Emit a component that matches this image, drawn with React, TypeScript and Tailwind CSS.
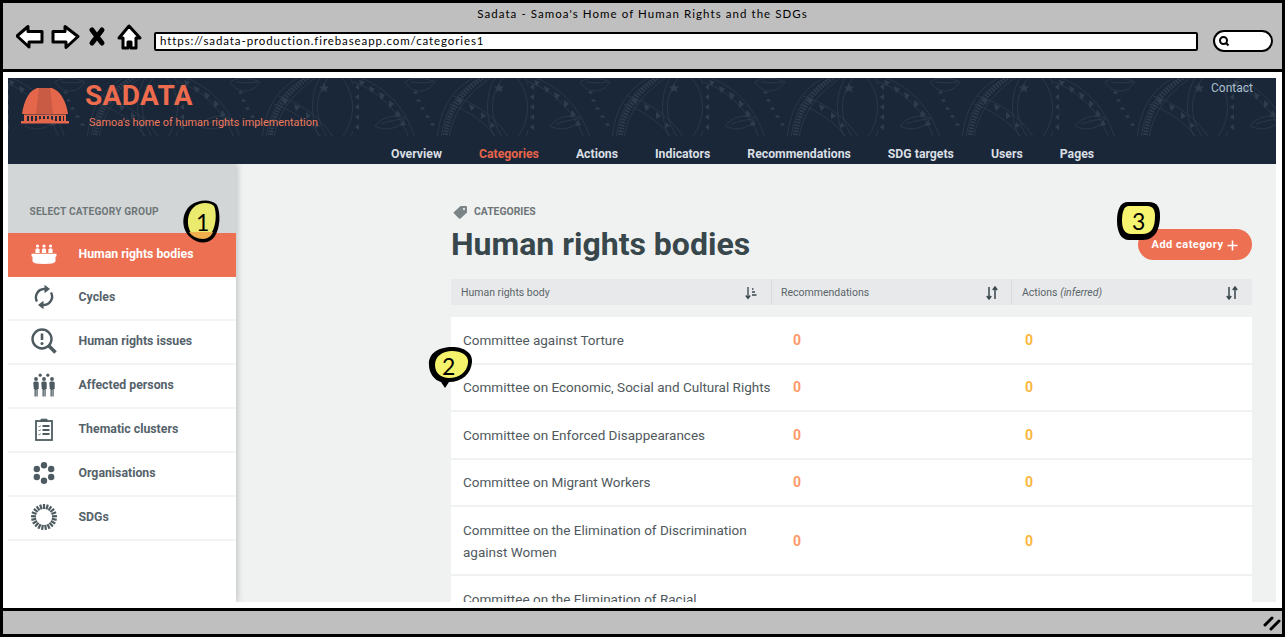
const navItems = ["Overview", "Categories", "Actions", "Indicators", "Recommendations", "SDG targets", "Users", "Pages"]

const rows = [
  { name: "Committee against Torture", h: "h-[47.500px]" },
  { name: "Committee on Economic, Social and Cultural Rights", h: "h-[47.500px]" },
  { name: "Committee on Enforced Disappearances", h: "h-[47.500px]" },
  { name: "Committee on Migrant Workers", h: "h-[47.500px]" },
  { name: "Committee on the Elimination of Discrimination against Women", h: "h-[69px]" },
  { name: "Committee on the Elimination of Racial Discrimination", h: "h-[69px]" },
]

function BodiesIcon({ color }: { color: string }) {
  return (
    <svg width="26" height="22" viewBox="0 0 26 22" fill={color}>
      <circle cx="6.500" cy="3" r="1.600" /><circle cx="13" cy="3" r="1.600" /><circle cx="19.500" cy="3" r="1.600" />
      <path d="M4.400 10V6.800q0-1.600 2.100-1.600t2.100 1.600V10zM10.900 10V6.800q0-1.600 2.100-1.600t2.100 1.600V10zM17.400 10V6.800q0-1.600 2.100-1.600t2.100 1.600V10z" />
      <path d="M0.500 10.800h25v2q0 .8-1 .9v4.800q-1 2.500-11.500 2.500T1.500 18.500v-4.800q-1-.1-1-.9z" />
    </svg>
  )
}

function CyclesIcon({ color }: { color: string }) {
  return (
    <svg width="22" height="26" viewBox="0 0 22 26" fill="none" stroke={color} strokeWidth="2.400">
      <path d="M4 17.500A8.400 8.400 0 0 1 11 5h1.500M18 8.500A8.400 8.400 0 0 1 11 21H9.500" />
      <path d="M11.500 0.800 17 5l-5.500 4.200z" fill={color} stroke="none" />
      <path d="M10.500 16.800 5 21l5.500 4.200z" fill={color} stroke="none" />
    </svg>
  )
}

function IssuesIcon({ color }: { color: string }) {
  return (
    <svg width="26" height="26" viewBox="0 0 26 26" fill="none" stroke={color} strokeWidth="2.400">
      <circle cx="11" cy="11" r="9.500" />
      <path d="M11 5.500v6.500" strokeWidth="2.600" />
      <circle cx="11" cy="15.500" r="1.500" fill={color} stroke="none" />
      <path d="M18 18l6.500 6.500" strokeWidth="3.600" />
    </svg>
  )
}

function PersonsIcon({ color }: { color: string }) {
  const figure = (x: number, key: string) => (
    <g key={key} fill={color}>
      <circle cx={x} cy="6" r="1.900" />
      <path d={`M${x - 2.700} 10q0-1.500 1.500-1.500h2.400q1.500 0 1.500 1.500v6h-1v7.500h-1.300v-6.500h-.6v6.500h-1.300V16h-.7z`} />
    </g>
  )
  return (
    <svg width="22" height="24" viewBox="0 0 22 24">
      <circle cx="7.200" cy="2.200" r="1.600" fill={color} />
      <circle cx="14.800" cy="2.200" r="1.600" fill={color} />
      {figure(3, "a")}
      {figure(11, "b")}
      {figure(19, "c")}
    </svg>
  )
}

function ClusterIcon({ color }: { color: string }) {
  return (
    <svg width="18" height="23" viewBox="0 0 18 23" fill="none" stroke={color}>
      <rect x="1" y="3" width="16" height="19" strokeWidth="1.800" />
      <path d="M6 3.500V1.200h6v2.300z" fill={color} strokeWidth="1" />
      <path d="M7.500 8h7M7.500 12h7M7.500 16h7" strokeWidth="1.800" />
      <path d="M3.500 8l1 1 1-1.500M3.500 12l1 1 1-1.500M3.500 16l1 1 1-1.500" strokeWidth="0.800" />
    </svg>
  )
}

function OrgIcon({ color }: { color: string }) {
  return (
    <svg width="22" height="22" viewBox="0 0 22 22" fill={color}>
      <circle cx="11" cy="3.300" r="3.200" />
      <circle cx="18.200" cy="7" r="3.200" />
      <circle cx="18.200" cy="15" r="3.200" />
      <circle cx="11" cy="18.700" r="3.200" />
      <circle cx="3.800" cy="15" r="3.200" />
      <circle cx="3.800" cy="7" r="3.200" />
    </svg>
  )
}

function SdgIcon({ color }: { color: string }) {
  const spokes = Array.from({ length: 21 }, (_, i) => (i * 360) / 21)
  return (
    <svg width="26" height="26" viewBox="0 0 26 26" stroke={color} strokeWidth="2.200">
      {spokes.map(a => (
        <line key={a} x1="13" y1="0" x2="13" y2="5" transform={`rotate(${a} 13 13)`} />
      ))}
    </svg>
  )
}

const categories = [
  { label: "Human rights bodies", Icon: BodiesIcon },
  { label: "Cycles", Icon: CyclesIcon },
  { label: "Human rights issues", Icon: IssuesIcon },
  { label: "Affected persons", Icon: PersonsIcon },
  { label: "Thematic clusters", Icon: ClusterIcon },
  { label: "Organisations", Icon: OrgIcon },
  { label: "SDGs", Icon: SdgIcon },
]

function SortIcon({ active }: { active?: boolean }) {
  if (active) {
    return (
      <svg width="12" height="14" viewBox="0 0 12 14" fill="none" stroke="#37474b" strokeWidth="1.300">
        <path d="M3 1v11M.8 9.500 3 12.500l2.200-3" />
        <path d="M7 3h1.500M7 6h3M7 9h4.500" />
      </svg>
    )
  }
  return (
    <svg width="14" height="14" viewBox="0 0 14 14" fill="none" stroke="#37474b" strokeWidth="1.500">
      <path d="M4 1v11.500M1.800 10 4 13l2.200-3" />
      <path d="M10 13V1.500M7.800 4 10 1l2.200 3" />
    </svg>
  )
}

function Callout({ n, blob, className, textClass }: { n: string; blob: React.ReactNode; className: string; textClass: string }) {
  return (
    <div className={`absolute ${className}`}>
      {blob}
      <span className={`absolute font-['Lato',sans-serif] text-black ${textClass}`}>{n}</span>
    </div>
  )
}

function HeaderPattern() {
  return (
    <svg className="absolute inset-0 h-full w-full" aria-hidden="true">
      <defs>
        <pattern id="tatau" width="175" height="58" patternUnits="userSpaceOnUse" x="-5" y="0">
          <g fill="none" stroke="#3a4858" strokeWidth="0.700">
            <path d="M88 60C92 30 105 12 130 -2M96 60C100 34 114 16 140 -2M84 60C88 28 100 10 124 -2" />
            <path d="M92 60C95 32 108 14 132 -2" strokeWidth="5" strokeDasharray="1.500 1.500" />
            <path d="M100 18c20 6 42 20 56 42M96 26c18 6 36 18 48 34" />
            <path d="M-2 3C20 10 44 28 56 60M8 0c22 8 44 28 54 60" />
            <path d="M142 60c-10-18-10-44 0-60M150 60c-14-20-14-42 0-60M172 60c10-20 10-42 0-60M164 60c14-20 14-42 0-60" />
            <path d="M22 48c8-10 20-12 30-8-4 10-18 14-30 8zM28 46c8-3 14-4 22-5" />
            <path d="M52 4c8-6 22-4 30 0-8 12-22 12-30 0zM58 4c8 1 14 1 22 0" />
          </g>
          <g fill="#3a4858">
            <path d="M6 2l6 2-4 4zM16 8l6 3-4 4zM26 14l6 3-4 5zM36 22l5 4-5 4zM44 32l4 5-6 2zM50 42l3 5-6 1zM104 20l6 2-3 5zM116 26l6 3-4 4zM128 34l5 4-5 3zM138 44l4 4-5 2z" />
            <path d="M146 5l1.500 3.500 3.500.2-2.700 2.200 1 3.300-3.300-2-3 2 .9-3.300-2.700-2.200 3.500-.2z" />
            <path d="M180 6l-4 3 4 3zM180 16l-4 3 4 3zM180 26l-4 3 4 3zM180 36l-4 3 4 3zM6 6l-4 3 4 3zM6 16l-4 3 4 3zM6 26l-4 3 4 3zM6 36l-4 3 4 3zM6 46l-4 3 4 3z" />
            <path d="M60 14l3-1 2 2-3 1zM63 22l3-1 2 2-3 1zM67 30l3-1 2 2-3 1zM72 38l3-1 2 2-3 1zM77 46l3-1 2 2-3 1z" />
          </g>
        </pattern>
      </defs>
      <rect width="100%" height="100%" fill="url(#tatau)" opacity="0.650" />
    </svg>
  )
}

export default function App() {
  return (
    <div className="relative flex h-[637px] w-[1285px] flex-col overflow-hidden border-[3px] border-black bg-white font-['Roboto',sans-serif]">
      {/* sketched browser chrome */}
      <div className="h-[69px] shrink-0 border-b-[3px] border-black bg-[#bfbfbf]">
        <div className="pt-[4px] text-center font-['Lato',sans-serif] text-[11.500px] leading-[14px] tracking-[1.060px] text-black">
          Sadata - Samoa's Home of Human Rights and the SDGs
        </div>
        <div className="flex items-center pl-[13px] pt-[2px]">
          <svg className="mb-[6px]" width="132" height="30" viewBox="0 0 132 30" fill="white" stroke="black" strokeWidth="3" strokeLinejoin="round">
            <path d="M1 13 12 3.500V8.500H26V19H13V24z" />
            <path d="M37 8.500H49V3.500L62 13.500 50 24.500V19H37z" />
            <path d="M76 7 86 20M86 7 76 20" strokeWidth="5" fill="none" strokeLinecap="round" />
            <path d="M103 15 113 3l11 12h-4v10h-5v-6h-3v6h-5V15z" />
          </svg>
          <div className="ml-[6px] flex h-[19px] w-[1044px] items-center rounded-[2px] border-2 border-black bg-white pl-[4px] font-['Lato',sans-serif] text-[11.500px] tracking-[0.900px] text-black">
            https://sadata-production.firebaseapp.com/categories1
          </div>
          <div className="relative ml-[15px] h-[22px] w-[60px] rounded-[14px] border-[2.500px] border-black bg-white">
            <svg className="absolute left-[3px] top-[3px]" width="12" height="12" viewBox="0 0 12 12" fill="none" stroke="black" strokeWidth="2">
              <circle cx="5.500" cy="5.500" r="3.500" />
              <path d="M8 8l2.500 2.500" />
            </svg>
          </div>
        </div>
      </div>

      {/* page */}
      <div className="flex min-h-0 flex-1 flex-col overflow-hidden pb-[6px] pl-[5px] pr-[6px] pt-[6px]">
        <div className="flex min-h-0 flex-1 flex-col overflow-hidden">
          <header className="relative h-[86px] shrink-0 bg-[#1a2739]">
            <div className="relative h-[58px] overflow-hidden">
              <HeaderPattern />
              <svg className="absolute left-[13px] top-[10px]" width="48" height="36" viewBox="0 0 48 36">
                <path d="M16 0h15c8 3 14 12 16 26H1C3 12 8 3 16 0z" fill="#e5674b" />
                <path d="M18 0h11l3 26H15z" fill="#c95a43" />
                <path d="M3 26.500h42V33h3v2.500H0V33h3zM6 28v5h2v-5zM10 28v5h2v-5zM14 28v5h2v-5zM18 28v5h2v-5zM22 28v5h2v-5zM26 28v5h2v-5zM30 28v5h2v-5zM34 28v5h2v-5zM38 28v5h2v-5zM42 28v5h1v-5z" fill="#e5674b" fillRule="evenodd" />
                <path d="M15 33q2-2 5-2h8q3 0 5 2z" fill="#e5674b" />
              </svg>
              <div className="absolute left-[77px] top-0 text-[28px] font-bold leading-[36px] tracking-[0.350px] text-[#ee6c4e]">SADATA</div>
              <div className="absolute left-[81px] top-[37px] text-[10.900px] leading-[16px] text-[#ee7a5c]">Samoa's home of human rights implementation</div>
              <div className="absolute right-[23px] top-[2px] text-[12px] leading-[16px] text-[#a9bfcd]">Contact</div>
            </div>
            <nav className="flex h-[28px] items-center gap-[37px] pl-[383px] pt-[8px] text-[12.270px] font-bold">
              {navItems.map(item => (
                <span key={item} className={item === "Categories" ? "text-[#e8654a]" : "text-[#d9dfe3]"}>{item}</span>
              ))}
            </nav>
          </header>

          <div className="flex min-h-0 flex-1 overflow-hidden bg-[#f0f2f1]">
            <aside className="w-[228px] shrink-0 bg-white shadow-[2px_0_6px_rgba(0,0,0,0.18)]">
              <div className="flex h-[69px] items-start bg-[#d3d6d7] pl-[21.500px] pt-[42px] text-[10.200px] font-bold uppercase leading-[12px] tracking-[0.150px] text-[#6e7679]">
                Select category group
              </div>
              {categories.map(({ label, Icon }, i) => (
                <div key={label} className={`flex h-[44px] items-center pb-[2px] text-[12.300px] font-bold ${i === 0 ? "bg-[#ee7053] text-white" : "border-b-2 border-[#f2f3f3] text-[#55626a]"}`}>
                  <div className="flex w-[70.500px] justify-center pl-[2px]">
                    <Icon color={i === 0 ? "#ffffff" : "#4d5b60"} />
                  </div>
                  <span>{label}</span>
                </div>
              ))}
            </aside>

            <main className="min-w-0 flex-1 pl-[215px] pr-[24px]">
              <div className="flex h-[115px] items-start justify-between">
                <div>
                  <div className="flex items-center gap-[6px] pl-[2px] pt-[40px] text-[10.400px] font-bold uppercase leading-[16px] text-[#6d7578]">
                    <svg width="15" height="14" viewBox="0 0 15 14" fill="#7b8487">
                      <path d="M7.500 1H13q1 0 1 1v5.500L7.500 13.500q-.8.700-1.500 0L1 8.500q-.7-.8 0-1.500zM11 3a1 1 0 1 0 .01 0z" fillRule="evenodd" />
                    </svg>
                    Categories
                  </div>
                  <h1 className="pt-[2px] text-[32px] font-bold leading-[44px] text-[#37474b]">Human rights bodies</h1>
                </div>
                <button className="mt-[65px] flex h-[31px] w-[114px] items-center justify-center gap-[4px] rounded-full bg-[#ee7053] pt-[2px] text-[11px] font-bold tracking-[0.500px] text-white">
                  Add category
                  <svg width="11" height="11" viewBox="0 0 11 11" stroke="white" strokeWidth="1.600"><path d="M5.500 0.500v10M0.500 5.500h10" /></svg>
                </button>
              </div>

              <div className="grid h-[26px] grid-cols-[320px_240px_1fr] bg-[#e8e9eb] text-[10.500px] text-[#5a6568]">
                <div className="flex items-center justify-between pl-[10px] pr-[14px] pt-[1px]">
                  Human rights body
                  <SortIcon active />
                </div>
                <div className="flex items-center justify-between border-l border-[#d9dbdd] pl-[9px] pr-[12px] pt-[1px]">
                  Recommendations
                  <SortIcon />
                </div>
                <div className="flex items-center justify-between border-l border-[#d9dbdd] pl-[10px] pr-[13px] pt-[1px]">
                  <span>Actions <i>(inferred)</i></span>
                  <SortIcon />
                </div>
              </div>

              <div className="mt-[12px]">
                {rows.map(row => (
                  <div key={row.name} className={`grid ${row.h} grid-cols-[320px_240px_1fr] items-center border-b-2 border-[#f0f2f1] bg-white text-[13.500px] leading-[22px] text-[#50595d]`}>
                    <div className="pl-[12px]">{row.name}</div>
                    <div className="pl-[22px] text-[14px] font-bold text-[#ff9a6b]">0</div>
                    <div className="pl-[14px] text-[14px] font-bold text-[#f9b83f]">0</div>
                  </div>
                ))}
              </div>
            </main>
          </div>
        </div>
      </div>

      {/* sketched status bar */}
      <div className="flex h-[26px] shrink-0 items-center justify-end border-t-[3px] border-black bg-[#bfbfbf] pr-[1px]">
        <svg width="18" height="16" viewBox="0 0 18 16" stroke="black" strokeWidth="3" strokeLinecap="round">
          <path d="M2 10 9 3M8 14l8-8" />
        </svg>
      </div>

      <Callout
        n="1"
        className="left-[178px] top-[196px] h-[46px] w-[40px]"
        textClass="left-[15px] top-[8px] text-[23px] leading-[30px]"
        blob={
          <svg width="40" height="46" viewBox="0 0 40 46">
            <path d="M9 38C0 30 0 14 10 6 18 0 31 0 36 6c4 9 3 23-2 31-6 9-18 8-25 1z" fill="black" />
            <path d="M10 34C5 26 6 14 13 8c6-5 16-5 20-1 3 7 2 19-2 26z" fill="#e9ea6e" />
            <path d="M8 33h24q-3 7-10 7-9 0-14-7z" fill="#f0b04d" />
          </svg>
        }
      />
      <Callout
        n="2"
        className="left-[425px] top-[343px] h-[44px] w-[46px]"
        textClass="left-[14px] top-[6px] text-[23px] leading-[28px]"
        blob={
          <svg width="46" height="44" viewBox="0 0 46 44">
            <path d="M1 19C0 7 11 1 24 1c12 0 21 6 20 15-1 12-10 20-23 20l-4 6-4-6C6 34 1 27 1 19z" fill="black" />
            <path d="M7 19c0-9 8-14 17-14 9 0 17 4 16 12-1 9-9 15-19 15-8 0-14-5-14-13z" fill="#f5f36b" />
          </svg>
        }
      />
      <Callout
        n="3"
        className="left-[1114px] top-[198px] h-[42px] w-[44px]"
        textClass="left-[15px] top-[6px] text-[23px] leading-[28px]"
        blob={
          <svg width="44" height="42" viewBox="0 0 44 42">
            <path d="M11 1h20c10 0 12 6 12 14 0 13-5 24-17 24H12C4 39 0 31 0 20 0 9 3 1 11 1z" fill="black" />
            <path d="M12 5h18c6 0 8 4 8 10 0 11-3 18-13 18H14C8 33 5 28 5 20 5 11 7 5 12 5z" fill="#f7f56f" />
          </svg>
        }
      />
    </div>
  )
}
